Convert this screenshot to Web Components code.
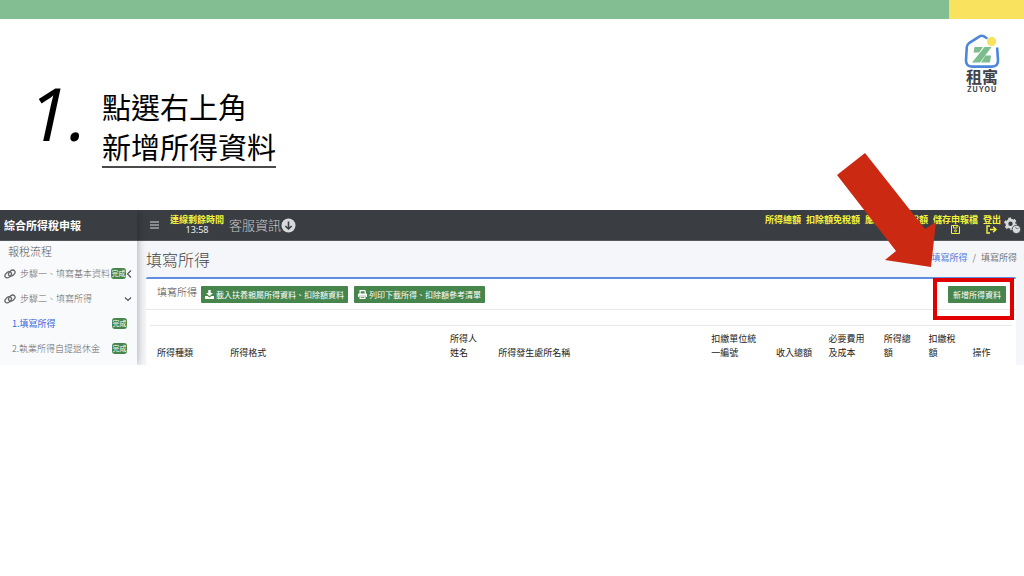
<!DOCTYPE html>
<html lang="zh-Hant">
<head>
<meta charset="utf-8">
<meta name="viewport" content="width=device-width, initial-scale=1">
<title>填寫所得</title>
<style>
    body {
        margin: 0;
        background-color: #fff;
        font-family: "Noto Sans CJK TC", "Noto Sans", sans-serif;
    }
</style>
</head>
<body>
<guide-slide>
    <brand-logo slot="logo"></brand-logo>
    <step-heading slot="heading" number="1.">
        點選右上角
        <span slot="action">新增所得資料</span>
    </step-heading>
    <tax-app></tax-app>
    <pointer-arrow slot="pointer"></pointer-arrow>
</guide-slide>

<script>
/* base class: renders css() and template() into an open shadow root */
class BaseElement extends HTMLElement {
    css = () => '';
    template = () => '<slot></slot>';

    connectedCallback() {
        if(this.shadowRoot) return;
        this.attachShadow({ mode: 'open' });
        this.shadowRoot.innerHTML = `
            <style>
                * { box-sizing: border-box; }
                ${this.css().trim()}
            </style>
            ${this.template().trim()}
        `;
    }
}


class GuideSlide extends BaseElement {
    css = () => `
        :host {
            display: block;
            position: relative;
        }

        .stripe {
            height: 19px;
            background: linear-gradient(to left, #f8e25e 75px, #83be93 75px);
        }

        .intro {
            display: flex;
            justify-content: space-between;
            align-items: flex-start;
            height: 191px;
            padding: 14px 23px 0 28px;
        }
    `;

    template = () => `
        <div class="stripe"></div>
        <header class="intro">
            <slot name="heading"></slot>
            <slot name="logo"></slot>
        </header>
        <slot></slot>
        <slot name="pointer"></slot>
    `;
}


class BrandLogo extends BaseElement {
    css = () => `
        :host {
            display: flex;
            flex-direction: column;
            align-items: center;
            width: 38px;
            color: #3f4349;
        }

        svg { width: 38px; height: 38px; }

        .name {
            font-size: 16px;
            line-height: 11px;
            font-weight: 700;
        }

        .latin {
            font: 700 7px/8px Inter, sans-serif;
            letter-spacing: 1px;
            margin-top: 4px;
        }
    `;

    template = () => `
        <svg viewBox="0 0 38 38" aria-hidden="true">
            <path d="M23.5 5 L20.6 3.2 Q18.8 2.2 17 3.2 L6 10.2 Q4 11.6 3.8 14 L3 27 Q2.7 33.6 9 33.6 H29 Q35.4 33.6 35 27 L34.2 15.5" fill="none" stroke="#4e86dc" stroke-width="2.6" stroke-linecap="round"/>
            <circle cx="28.6" cy="8.4" r="4.6" fill="#f8e25e"/>
            <path d="M11.5 14 H20 L16 19.5 H10.5 Z M21.5 14 H28.5 L17 29.5 H9 Z M22.5 22.5 H28 L27 29.5 H18 Z" fill="#7cbd8e"/>
        </svg>
        <span class="name">租寓</span>
        <span class="latin">ZUYOU</span>
    `;
}


class StepHeading extends BaseElement {
    css = () => `
        :host {
            display: flex;
            color: #000;
        }

        .number {
            width: 74px;
            font: italic 400 74px/96px "Open Sans", "Noto Sans", sans-serif;
            padding-top: 32px;
        }

        h1 {
            margin: 0;
            padding-top: 53px;
            font-size: 29px;
            line-height: 40px;
            font-weight: 400;
        }

        .action {
            width: fit-content;
            border-bottom: 2px solid #4a4a4a;
        }
    `;

    template = () => `
        <div class="number">${this.getAttribute('number')}</div>
        <h1>
            <div><slot></slot></div>
            <div class="action"><slot name="action"></slot></div>
        </h1>
    `;
}


class TaxApp extends BaseElement {
    css = () => `
        :host {
            display: grid;
            grid-template-columns: 137px 1fr;
            background-color: #f4f6fa;
            overflow: hidden;
        }
    `;

    template = () => `
        <app-sidebar></app-sidebar>
        <div>
            <app-navbar></app-navbar>
            <income-page></income-page>
        </div>
    `;
}


class AppSidebar extends BaseElement {
    css = () => `
        :host {
            display: block;
            position: relative;
            background-color: #f9fafc;
            box-shadow: 0 0 9px rgba(0, 0, 0, .35);
            z-index: 1;
        }

        .brand {
            height: 31px;
            padding-left: 4px;
            background-color: #3a3e43;
            border-bottom: 1px solid #55595e;
            color: #fff;
            font-size: 11px;
            line-height: 30px;
            font-weight: 700;
        }

        h2 {
            margin: 0;
            padding-left: 8px;
            color: #555;
            font-size: 11px;
            line-height: 20px;
            font-weight: 300;
        }
    `;

    template = () => `
        <div class="brand">綜合所得稅申報</div>
        <nav>
            <h2>報稅流程</h2>
            <nav-step done arrow="left">步驟一、填寫基本資料</nav-step>
            <nav-step arrow="down">步驟二、填寫所得</nav-step>
            <nav-step sub active done>1.填寫所得</nav-step>
            <nav-step sub done>2.執業所得自提退休金</nav-step>
        </nav>
    `;
}


class NavStep extends BaseElement {
    css = () => `
        :host { display: block; }

        a {
            display: flex;
            align-items: center;
            height: 25px;
            padding: 0 5px 0 4px;
            color: ${this.hasAttribute('active') ? '#2f6ade' : '#666'};
            font-size: 9px;
            line-height: 24px;
            font-weight: ${this.hasAttribute('active') ? '400' : '300'};
            text-decoration: none;
            white-space: nowrap;
        }

        :host([sub]) a { padding: 0 10px 0 12px; }

        .link { width: 12px; height: 12px; margin-right: 4px; }
        .label { flex: 1; }
        .arrow { width: 8px; height: 8px; }
        :host([done]) .arrow { margin-right: -2px; }
    `;

    template = () => {
        const arrows = { left: 'M5 .5 L1.5 4 L5 7.5', down: 'M1 2.5 L4 5.5 L7 2.5' };
        const arrow = arrows[this.getAttribute('arrow')];

        return `
        <a href="#">
            ${this.hasAttribute('sub') ? '' : `
            <svg class="link" viewBox="0 0 12 12" fill="none" stroke="#666" stroke-width="1.3" aria-hidden="true">
                <ellipse cx="4.2" cy="6.8" rx="3.6" ry="2.5" transform="rotate(-40 4.2 6.8)"/>
                <ellipse cx="7.8" cy="5.2" rx="3.6" ry="2.5" transform="rotate(-40 7.8 5.2)"/>
            </svg>`}
            <span class="label"><slot></slot></span>
            ${this.hasAttribute('done') ? '<status-badge>完成</status-badge>' : ''}
            ${arrow ? `
            <svg class="arrow" viewBox="0 0 8 8" fill="none" stroke="#555" stroke-width="1.2" aria-hidden="true">
                <path d="${arrow}"/>
            </svg>` : ''}
        </a>
        `;
    }
}


class StatusBadge extends BaseElement {
    css = () => `
        :host {
            display: block;
            width: 15px;
            height: 11px;
            border-radius: 3px;
            background-color: #46854c;
            color: #fff;
            font-size: 7px;
            line-height: 11px;
            font-weight: 400;
            text-align: center;
        }
    `;
}


class AppNavbar extends BaseElement {
    css = () => `
        :host {
            display: flex;
            align-items: center;
            height: 31px;
            padding: 0 3px 0 13px;
            background-color: #3a3e43;
            border-bottom: 1px solid #55595e;
            color: #eee;
            font-size: 9px;
            line-height: 10px;
            white-space: nowrap;
        }

        button {
            display: flex;
            padding: 0;
            border: 0;
            background: none;
            color: #d8d9da;
        }

        a {
            color: #f6f23c;
            font-weight: 700;
            text-decoration: none;
            text-align: center;
        }

        .timer { margin: 0 5px 0 11px; text-align: center; }
        .timer b { display: block; color: #f6f23c; }
        .timer span { font-family: "Noto Sans", sans-serif; }

        .service {
            display: flex;
            align-items: center;
            color: #c8c9cb;
            font-size: 13px;
            line-height: 20px;
            font-weight: 300;
        }

        .totals {
            display: flex;
            gap: 5px;
            height: 20px;
            margin-left: auto;
        }

        .totals svg { display: block; margin: 0 auto; }
        .gear { margin-left: 3px; }
    `;

    template = () => `
        <button aria-label="選單">
            <svg width="9" height="10" viewBox="0 0 9 10" stroke="currentColor" stroke-width="1.2"><path d="M0 2H9M0 5H9M0 8H9"/></svg>
        </button>
        <div class="timer"><b>連線剩餘時間</b><span>13:58</span></div>
        <a class="service" href="#">客服資訊
            <svg width="15" height="15" viewBox="0 0 15 15" aria-hidden="true">
                <circle cx="7.5" cy="7.5" r="7" fill="#d8d9da"/>
                <path d="M7.5 3.5V11M4.3 8L7.5 11L10.7 8" fill="none" stroke="#3a3e43" stroke-width="1.6"/>
            </svg>
        </a>
        <nav class="totals">
            <a href="#">所得總額</a>
            <a href="#">扣除額免稅額</a>
            <a href="#">應自行繳納稅額</a>
            <a href="#">儲存申報檔
                <svg width="9" height="9" viewBox="0 0 9 9" fill="none" stroke="currentColor" aria-hidden="true">
                    <path d="M1 .5H7L8.5 2V8.5H.5V.5ZM2.5 .5V3H6V.5"/><circle cx="4.5" cy="5.8" r="1"/>
                </svg>
            </a>
            <a href="#">登出
                <svg width="11" height="9" viewBox="0 0 11 9" fill="none" stroke="currentColor" stroke-width="1.4" aria-hidden="true">
                    <path d="M4 1H1V8H4M4 4.5H10M7.2 1.8L10 4.5L7.2 7.2"/>
                </svg>
            </a>
        </nav>
        <button class="gear" aria-label="設定">
            <svg width="17" height="17" viewBox="0 0 17 17">
                <circle cx="6.5" cy="6.8" r="3.6" fill="none" stroke="#d8d9da" stroke-width="2.8"/>
                <circle cx="6.5" cy="6.8" r="5.4" fill="none" stroke="#d8d9da" stroke-width="2" stroke-dasharray="2.8 2.85"/>
                <circle cx="12.4" cy="12.4" r="4.2" fill="#d8d9da" stroke="#3a3e43" stroke-width=".8"/>
                <path d="M11.6 9.6A2 2 0 0 0 15 11.4L12.8 11.4Z" fill="#3a3e43"/>
            </svg>
        </button>
    `;
}


class IncomePage extends BaseElement {
    css = () => `
        :host {
            display: block;
            padding: 0 8px 0 9px;
        }

        .title {
            display: flex;
            justify-content: space-between;
            align-items: center;
            height: 36px;
            color: #444;
        }

        h2 {
            margin: 0;
            font-size: 16px;
            line-height: 24px;
            font-weight: 300;
        }

        .breadcrumb {
            display: flex;
            gap: 5px;
            margin-right: -1px;
            padding-bottom: 2px;
            color: #777;
            font-size: 9px;
            line-height: 14px;
        }

        .breadcrumb a { color: #4a7ddd; text-decoration: none; }

        .card {
            border-top: 2px solid #608fe0;
            border-radius: 2px 2px 0 0;
            background-color: #fff;
        }

        .toolbar {
            display: flex;
            align-items: center;
            gap: 6px;
            height: 31px;
            padding: 0 10px 0 11px;
            border-bottom: 1px solid #e6e7ea;
        }

        h3 {
            margin: 0 -2px 0 0;
            padding-bottom: 5px;
            color: #444;
            font-size: 10px;
            line-height: 16px;
            font-weight: 300;
        }

        /* red frame drawn over the toolbar, round the button */
        .marked { position: relative; margin-left: auto; }

        .marked::after {
            content: '';
            position: absolute;
            inset: -8px -8px -17px -15px;
            border: 4px solid #e00000;
            pointer-events: none;
        }
    `;

    template = () => `
        <div class="title">
            <h2>填寫所得</h2>
            <nav class="breadcrumb"><a href="#">填寫所得</a><span>/</span><span>填寫所得</span></nav>
        </div>
        <section class="card">
            <div class="toolbar">
                <h3>填寫所得</h3>
                <action-button icon="download">載入扶養親屬所得資料、扣除額資料</action-button>
                <action-button icon="print">列印下載所得、扣除額參考清單</action-button>
                <div class="marked"><action-button>新增所得資料</action-button></div>
            </div>
            <income-table></income-table>
        </section>
    `;
}


class ActionButton extends BaseElement {
    css = () => `
        :host { display: block; }

        button {
            display: flex;
            align-items: center;
            gap: 2px;
            height: 17px;
            padding: 0 5px;
            border: 0;
            border-radius: 1px;
            background-color: #46854c;
            color: #fff;
            font: 400 8px/17px "Noto Sans CJK TC", "Noto Sans", sans-serif;
            white-space: nowrap;
        }

        :host([icon]) button { padding: 0 4px; }
    `;

    template = () => {
        const icons = {
            download: '<path d="M3.3 0H5.7V3H8L4.5 6.3L1 3H3.3ZM0 6H2.5L4.5 7.6L6.5 6H9V9H0Z"/>',
            print: '<path d="M1.5 0H7L7.8 1V3.5H6.6V1.2H2.7V3.5H1.5ZM0 4.5Q0 3.5 1 3.5H8Q9 3.5 9 4.5V7H7.8V5.8H1.2V7H0ZM1.5 6.2H7.5V9H1.5ZM2.7 7.2V8H6.3V7.2Z" fill-rule="evenodd"/>'
        };
        const icon = icons[this.getAttribute('icon')];

        return `
        <button>
            ${icon ? `<svg width="9" height="9" viewBox="0 0 9 9" fill="currentColor" aria-hidden="true">${icon}</svg>` : ''}
            <slot></slot>
        </button>
        `;
    }
}


class IncomeTable extends BaseElement {
    columns = [
        ['所得種類', 8.5],
        ['所得格式', 25.5],
        ['所得人姓名', 5.6],
        ['所得發生處所名稱', 24.7],
        ['扣繳單位統一編號', 7.5],
        ['收入總額', 6.1],
        ['必要費用及成本', 6.4],
        ['所得總額', 5.2],
        ['扣繳稅額', 5.1],
        ['操作', 5.4]
    ];

    css = () => `
        :host {
            display: block;
            padding: 15px 4px 0;
        }

        table {
            width: 100%;
            table-layout: fixed;
            border-collapse: collapse;
            border-top: 1px solid #e6e7ea;
        }

        th {
            padding: 6px 8px 5px 7px;
            color: #222;
            font-size: 9px;
            line-height: 14px;
            font-weight: 400;
            text-align: left;
            vertical-align: bottom;
        }
    `;

    template = () => `
        <table>
            <thead>
                <tr>${this.columns.map(([name, width]) => `<th scope="col" style="width: ${width}%">${name}</th>`).join('')}</tr>
            </thead>
        </table>
    `;
}


class PointerArrow extends BaseElement {
    css = () => `
        :host {
            position: absolute;
            top: 153px;
            right: 87px;
            z-index: 2;
            pointer-events: none;
        }

        svg { display: block; }
    `;

    template = () => `
        <svg width="100" height="115" viewBox="0 0 100 115" fill="#cb2911" aria-hidden="true">
            <path d="M28 0L88 76L99 69L94 114L48 107L59 98L0 22Z"/>
        </svg>
    `;
}

customElements.define('guide-slide', GuideSlide);
customElements.define('brand-logo', BrandLogo);
customElements.define('step-heading', StepHeading);
customElements.define('tax-app', TaxApp);
customElements.define('app-sidebar', AppSidebar);
customElements.define('nav-step', NavStep);
customElements.define('status-badge', StatusBadge);
customElements.define('app-navbar', AppNavbar);
customElements.define('income-page', IncomePage);
customElements.define('action-button', ActionButton);
customElements.define('income-table', IncomeTable);
customElements.define('pointer-arrow', PointerArrow);
</script>
</body>
</html>
